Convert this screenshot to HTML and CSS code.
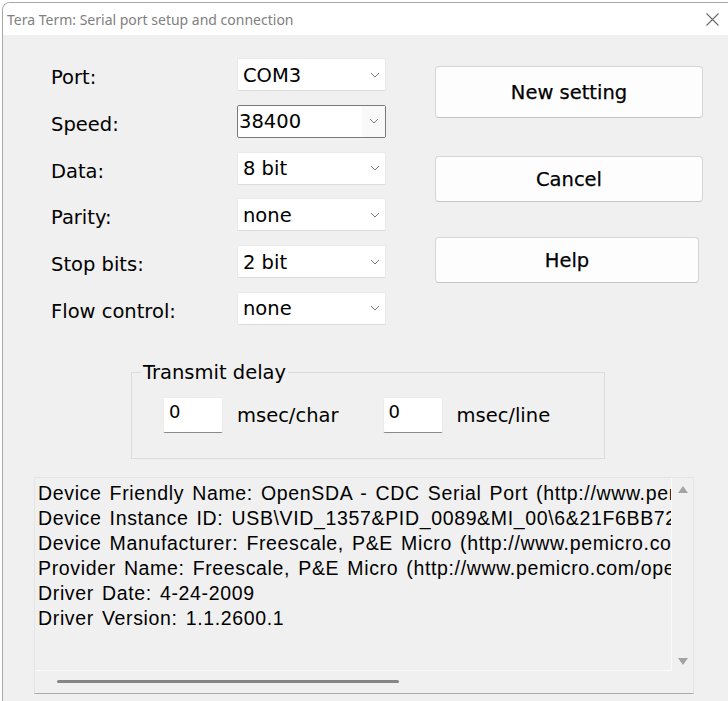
FILE: index.html
```html
<!DOCTYPE html>
<html lang="en">
<head>
<meta charset="utf-8">
<title>Tera Term: Serial port setup and connection</title>
<link rel="stylesheet" href="styles.css">
</head>
<body>
<div class="window">
  <div class="titlebar">
    <span class="title">Tera Term: Serial port setup and connection</span>
    <svg class="close" width="13" height="13" viewBox="0 0 13 13"><path d="M0.5 0.5 L12.5 12.5 M12.5 0.5 L0.5 12.5" stroke="#6a6a6a" stroke-width="1.1" fill="none"/></svg>
  </div>
  <div class="content">
    <div class="top">
      <div class="fields">
        <span class="label">Port:</span>
        <div class="combo"><span>COM3</span><svg class="chev" width="10" height="6" viewBox="0 0 10 6"><polyline points="1,1 5,5 9,1" fill="none" stroke="#7a7a7a" stroke-width="1"/></svg></div>
        <span class="label">Speed:</span>
        <div class="combo focused"><span>38400</span><span class="arrow-area"><svg class="chev" width="10" height="6" viewBox="0 0 10 6"><polyline points="1,1 5,5 9,1" fill="none" stroke="#7a7a7a" stroke-width="1"/></svg></span></div>
        <span class="label">Data:</span>
        <div class="combo"><span>8 bit</span><svg class="chev" width="10" height="6" viewBox="0 0 10 6"><polyline points="1,1 5,5 9,1" fill="none" stroke="#7a7a7a" stroke-width="1"/></svg></div>
        <span class="label">Parity:</span>
        <div class="combo"><span>none</span><svg class="chev" width="10" height="6" viewBox="0 0 10 6"><polyline points="1,1 5,5 9,1" fill="none" stroke="#7a7a7a" stroke-width="1"/></svg></div>
        <span class="label">Stop bits:</span>
        <div class="combo"><span>2 bit</span><svg class="chev" width="10" height="6" viewBox="0 0 10 6"><polyline points="1,1 5,5 9,1" fill="none" stroke="#7a7a7a" stroke-width="1"/></svg></div>
        <span class="label">Flow control:</span>
        <div class="combo"><span>none</span><svg class="chev" width="10" height="6" viewBox="0 0 10 6"><polyline points="1,1 5,5 9,1" fill="none" stroke="#7a7a7a" stroke-width="1"/></svg></div>
      </div>
      <div class="buttons">
        <div class="btn btn-new">New setting</div>
        <div class="btn btn-cancel">Cancel</div>
        <div class="btn btn-help">Help</div>
      </div>
    </div>
    <fieldset class="group">
      <legend>Transmit delay</legend>
      <div class="delay-row">
        <div class="edit">0</div><span class="unit">msec/char</span>
        <div class="edit edit-2">0</div><span class="unit">msec/line</span>
      </div>
    </fieldset>
    <div class="info">
      <div class="info-text">Device Friendly Name: OpenSDA - CDC Serial Port (http://www.pemicro.com/opensda) (COM3)
Device Instance ID: USB\VID_1357&amp;PID_0089&amp;MI_00\6&amp;21F6BB72&amp;0&amp;0000
Device Manufacturer: Freescale, P&amp;E Micro (http://www.pemicro.com/opensda)
Provider Name: Freescale, P&amp;E Micro (http://www.pemicro.com/opensda)
Driver Date: 4-24-2009
Driver Version: 1.1.2600.1</div>
      <div class="vscroll">
        <svg width="10" height="7" viewBox="0 0 10 7"><polygon points="5,0 10,7 0,7" fill="#a3a3a3"/></svg>
        <svg width="10" height="7" viewBox="0 0 10 7"><polygon points="0,0 10,0 5,7" fill="#a3a3a3"/></svg>
      </div>
      <div class="hscroll"><div class="thumb"></div></div>
      <div class="corner"></div>
    </div>
  </div>
</div>
</body>
</html>
```

FILE: styles.css
```css
html, body {
  margin: 0;
  padding: 0;
  background: #ffffff;
  overflow: hidden;
}

body {
  width: 728px;
  height: 701px;
  font-family: "DejaVu Sans", "Liberation Sans", sans-serif;
  color: #000;
}

.window {
  margin: 2px 0 0 2px;
  width: 740px;
  height: 720px;
  border-top: 1px solid #a8a8a8;
  border-left: 1px solid #a8a8a8;
  border-top-left-radius: 8px;
  overflow: hidden;
  background: #f0f0f0;
}

.titlebar {
  height: 32px;
  background: #ffffff;
  display: flex;
  align-items: center;
  justify-content: space-between;
  padding: 0 9px 0 4px;
  width: 712px;
}

.title {
  font-family: "Noto Sans", "Open Sans", sans-serif;
  font-size: 14px;
  color: #808080;
  padding-top: 1px;
}

.close {
  display: block;
  margin-top: 1px;
}

.content {
  padding: 23px 0 0 0;
}

.top {
  display: flex;
  align-items: flex-start;
}

.fields {
  margin-left: 48px;
  display: grid;
  grid-template-columns: 186px 149px;
  grid-auto-rows: 33px;
  row-gap: 13.8px;
}

.label {
  font-size: 19.5px;
  line-height: 33px;
  padding-top: 3px;
  white-space: nowrap;
}

.combo {
  background: #ffffff;
  border: 1px solid #e9e9e9;
  border-bottom-color: #dcdcdc;
  border-radius: 2px;
  display: flex;
  align-items: center;
  justify-content: space-between;
  padding: 0 5px 0 5px;
  font-size: 19.5px;
}

.combo span {
  padding-top: 1px;
}

.combo.focused {
  border: 1px solid #7a7a7a;
  padding: 0 0 0 1px;
}

.combo.focused .arrow-area {
  align-self: stretch;
  width: 23px;
  padding: 0;
  background: #f9f9f9;
  display: flex;
  align-items: center;
  justify-content: center;
}

.chev {
  display: block;
}

.buttons {
  margin-left: 49px;
  margin-top: 8px;
  width: 268px;
  display: flex;
  flex-direction: column;
}

.btn {
  background: #fdfdfd;
  border: 1px solid #d6d6d6;
  border-bottom-color: #c4c4c4;
  border-radius: 4px;
  display: flex;
  align-items: center;
  justify-content: center;
  font-size: 19.5px;
  box-sizing: border-box;
  -webkit-text-stroke: 0.25px #000;
}

.btn-new {
  height: 52px;
}

.btn-cancel {
  height: 46px;
  margin-top: 38px;
}

.btn-help {
  height: 46px;
  margin-top: 35px;
  width: 264px;
}

.group {
  margin: 37px 0 0 128px;
  width: 474px;
  box-sizing: border-box;
  border: 1px solid #dcdcdc;
  padding: 0 0 25px 0;
  min-width: 0;
}

.group legend {
  font-size: 19.5px;
  line-height: 22px;
  padding: 0 2px;
  margin-left: 9px;
}

.delay-row {
  display: flex;
  align-items: center;
  margin: 13px 0 0 31px;
}

.edit {
  width: 60px;
  height: 36px;
  box-sizing: border-box;
  background: #ffffff;
  border: 1px solid #ececec;
  border-bottom: 1px solid #8a8a8a;
  border-radius: 2px;
  font-size: 18px;
  padding: 3px 0 0 5px;
  flex: none;
}

.edit-2 {
  margin-left: 44px;
}

.unit {
  font-size: 19.5px;
  margin-left: 14px;
  padding-top: 2px;
}

.info {
  margin: 18px 0 0 31px;
  width: 660px;
  height: 217px;
  box-sizing: border-box;
  border: 1px solid #e4e4e4;
  border-bottom: 1px solid #ababab;
  display: grid;
  grid-template-columns: 1fr 21px;
  grid-template-rows: 1fr 22px;
}

.info-text {
  white-space: pre;
  overflow: hidden;
  font-family: "Liberation Sans", "DejaVu Sans", sans-serif;
  font-size: 19.5px;
  letter-spacing: 0.65px;
  word-spacing: 2px;
  line-height: 25px;
  padding: 3px 0 0 3px;
  border-right: 1px solid #fafafa;
  border-bottom: 1px solid #fafafa;
}

.vscroll {
  display: flex;
  flex-direction: column;
  justify-content: space-between;
  align-items: center;
  padding: 8px 0 6px 0;
}

.vscroll svg {
  display: block;
}

.hscroll {
  display: flex;
  align-items: center;
  padding-left: 22px;
}

.thumb {
  width: 342px;
  height: 3px;
  border-radius: 2px;
  background: #858585;
}
```
